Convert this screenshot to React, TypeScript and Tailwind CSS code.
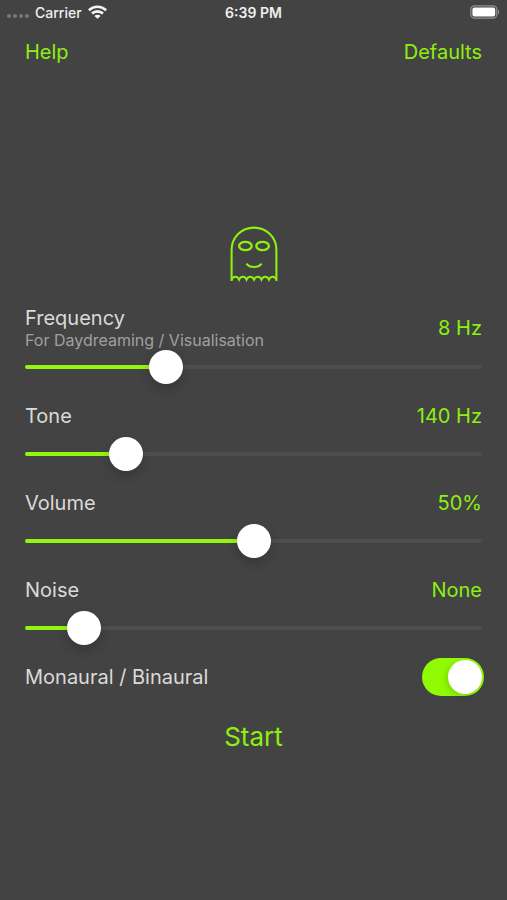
import React, { useState } from 'react';

interface SliderRowProps {
  id: string;
  label: string;
  hint?: string;
  value: number;
  onChange: (value: number) => void;
  format: (value: number) => string;
}

const WifiIcon = () => (
  <svg width="19" height="14" viewBox="0 0 19 14" fill="none" stroke="#f5f5f5" strokeWidth="2.7" aria-hidden="true">
    <path d="M0.9 5.2C5.7 0.6 13.3 0.6 18.1 5.2" />
    <path d="M4 8.6C7.1 5.7 11.9 5.7 15 8.6" />
    <path d="M9.5 13.8L6.4 10.9C8 9.4 11 9.4 12.6 10.9Z" fill="#f5f5f5" stroke="none" />
  </svg>
);

const BatteryIcon = () => (
  <svg width="30" height="14" viewBox="0 0 30 14" fill="none" aria-hidden="true">
    <rect x="0.8" y="0.8" width="26" height="12.4" rx="3.6" stroke="#929292" strokeWidth="1.2" />
    <rect x="2.4" y="2.4" width="22.8" height="9.2" rx="2" fill="#fff" />
    <path d="M28 4.8C29.6 5.4 29.6 8.6 28 9.2Z" fill="#929292" />
  </svg>
);

const GhostIcon = () => (
  <svg width="48" height="56" viewBox="0 0 48 56" fill="none" stroke="#8cf010" strokeWidth="2.1" aria-hidden="true">
    <path d="M1.6 55V24C1.6 11 11.5 1.6 24 1.6S46.4 11 46.4 24V55" />
    <path d="M1.6 53.6C3.4 49.8 7.3 49.8 9.1 53.6C10.9 49.8 14.7 49.8 16.5 53.6C18.3 49.8 22.2 49.8 24 53.6C25.8 49.8 29.7 49.8 31.5 53.6C33.3 49.8 37.1 49.8 38.9 53.6C40.7 49.8 44.6 49.8 46.4 53.6" />
    <ellipse cx="15.4" cy="20" rx="6.3" ry="4.1" strokeWidth="2.4" />
    <ellipse cx="32.6" cy="20" rx="6.3" ry="4.1" strokeWidth="2.4" />
    <path d="M16.4 37.6C20 42.2 28 42.2 31.6 37.6" />
  </svg>
);

const SliderRow: React.FC<SliderRowProps> = ({ id, label, hint, value, onChange, format }) => {
  const fill = `linear-gradient(to right, #93f60f ${value}%, #4e4e4e ${value}%)`;

  return (
    <div className="flex flex-col">
      <div className="flex items-center justify-between">
        <div className={`flex flex-col ${hint ? '' : 'pb-1.5'}`}>
          <label htmlFor={id} className={`text-[20px] text-[#dadada] ${hint ? 'leading-6' : 'leading-[30px]'}`}>
            {label}
          </label>
          {hint && <span className="text-[16px] leading-5 text-[#a0a0a0]">{hint}</span>}
        </div>
        <output htmlFor={id} className={`text-[20px] leading-[30px] text-[#8cf010] ${hint ? '' : 'pb-1.5'}`}>
          {format(value)}
        </output>
      </div>
      <div className="flex h-[34px] items-center">
        <input
          id={id}
          type="range"
          min={0}
          max={100}
          step="any"
          value={value}
          onChange={(e) => onChange(Number(e.target.value))}
          style={{ backgroundImage: fill }}
          className="h-1 w-full appearance-none rounded-full [&::-webkit-slider-thumb]:size-[34px] [&::-webkit-slider-thumb]:appearance-none [&::-webkit-slider-thumb]:rounded-full [&::-webkit-slider-thumb]:bg-white [&::-webkit-slider-thumb]:shadow-[0_5px_12px_rgba(0,0,0,0.2)]"
        />
      </div>
    </div>
  );
};

const App: React.FC = () => {
  const [frequency, setFrequency] = useState(29.3);
  const [tone, setTone] = useState(19.8);
  const [volume, setVolume] = useState(50);
  const [noise, setNoise] = useState(10);
  const [binaural, setBinaural] = useState(true);
  const [playing, setPlaying] = useState(false);

  const resetDefaults = () => {
    setFrequency(29.3);
    setTone(19.8);
    setVolume(50);
    setNoise(10);
    setBinaural(true);
  };

  return (
    <div className="flex min-h-screen flex-col bg-[#434343] font-['Inter',sans-serif]">
      <div className="grid h-6 grid-cols-[1fr_auto_1fr] items-center px-[7px] text-[14px] font-medium text-[#f0f0f0]">
        <div className="flex items-center gap-1.5">
          <div className="flex gap-0.5 pt-2">
            {[0, 1, 2, 3].map((dot) => (
              <span key={dot} className="size-1 rounded-full bg-[#777777]" />
            ))}
          </div>
          <span>Carrier</span>
          <WifiIcon />
        </div>
        <span className="text-center font-semibold">6:39 PM</span>
        <div className="flex justify-end">
          <BatteryIcon />
        </div>
      </div>

      <nav className="flex h-14 items-center justify-between px-[25px] text-[20px] text-[#8cf010]">
        <button type="button">Help</button>
        <button type="button" onClick={resetDefaults}>Defaults</button>
      </nav>

      <main className="flex flex-1 flex-col justify-center px-[25px] pt-0.5">
        <div className="flex justify-center pb-6">
          <GhostIcon />
        </div>
        <div className="flex flex-col gap-[17px]">
          <SliderRow
            id="frequency"
            label="Frequency"
            hint="For Daydreaming / Visualisation"
            value={frequency}
            onChange={setFrequency}
            format={(v) => `${Math.round(v * 0.273)} Hz`}
          />
          <SliderRow
            id="tone"
            label="Tone"
            value={tone}
            onChange={setTone}
            format={(v) => `${Math.round(v * 7.07)} Hz`}
          />
          <SliderRow
            id="volume"
            label="Volume"
            value={volume}
            onChange={setVolume}
            format={(v) => `${Math.round(v)}%`}
          />
          <SliderRow
            id="noise"
            label="Noise"
            value={noise}
            onChange={setNoise}
            format={(v) => (v < 25 ? 'None' : v < 50 ? 'White' : v < 75 ? 'Pink' : 'Brown')}
          />
        </div>
        <div className="flex items-center justify-between pt-[13px]">
          <label htmlFor="binaural" className="text-[20px] text-[#dadada]">Monaural / Binaural</label>
          <input
            id="binaural"
            type="checkbox"
            role="switch"
            checked={binaural}
            onChange={(e) => setBinaural(e.target.checked)}
            className="-mr-0.5 flex h-[38px] w-[62px] appearance-none items-center rounded-full bg-[#5a5a5a] p-0.5 before:size-[34px] before:rounded-full before:bg-white before:shadow-[-2px_2px_6px_rgba(0,0,0,0.15)] checked:justify-end checked:bg-[#90fb04]"
          />
        </div>
        <div className="flex justify-center pt-[22px]">
          <button type="button" onClick={() => setPlaying(!playing)} className="text-[26px] leading-[38px] text-[#8cf010]">
            {playing ? 'Stop' : 'Start'}
          </button>
        </div>
      </main>
    </div>
  );
};

export default App;
